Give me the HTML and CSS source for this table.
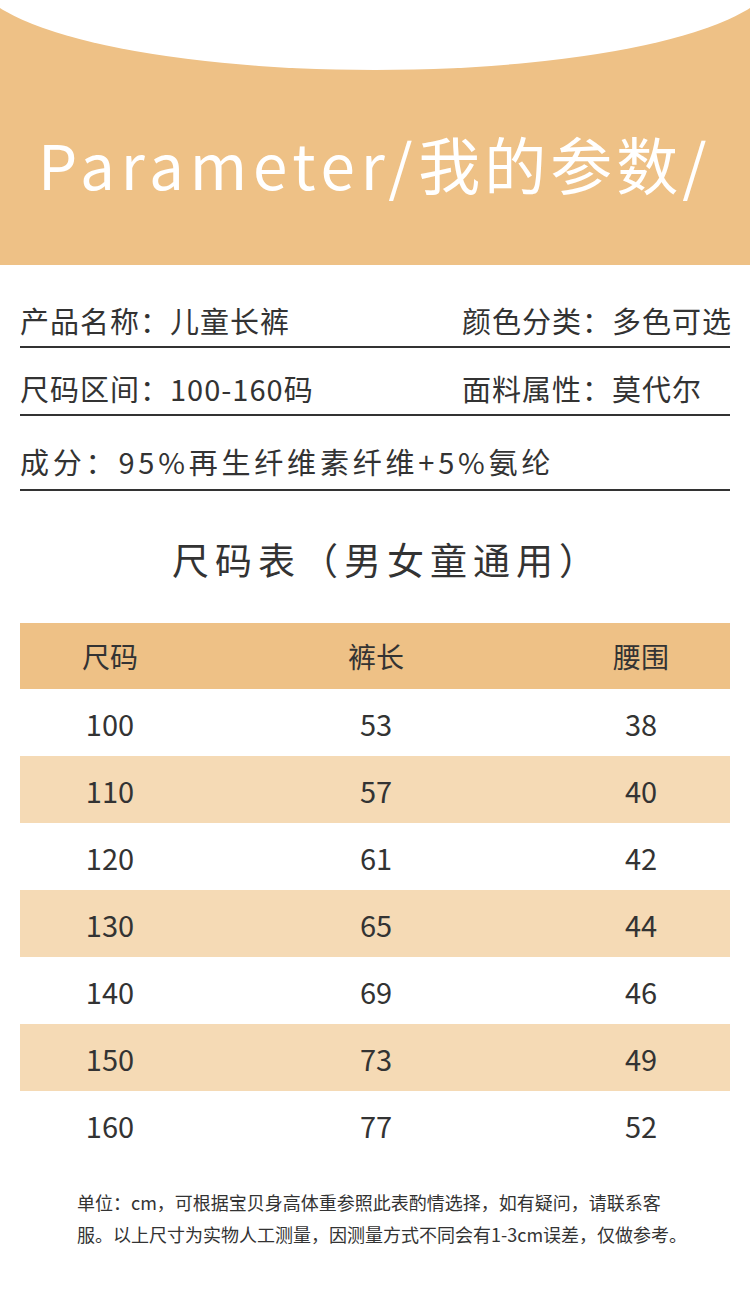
FILE: index.html
```html
<!DOCTYPE html>
<html lang="zh-CN">
<head>
<meta charset="utf-8">
<title>Parameter/我的参数/</title>
<link rel="stylesheet" href="styles.css">
</head>
<body>
<div class="page">
  <header class="hero">
    <div class="hero-arc"></div>
    <h1 class="hero-title"><span class="latin">Parameter/</span>我的参数/</h1>
  </header>

  <section class="info">
    <div class="info-row first">
      <div class="info-cell left">产品名称：儿童长裤</div>
      <div class="info-cell">颜色分类：多色可选</div>
    </div>
    <div class="info-row second">
      <div class="info-cell left">尺码区间：100-160码</div>
      <div class="info-cell">面料属性：莫代尔</div>
    </div>
    <div class="info-row third">
      <div class="info-cell wide">成分：95%再生纤维素纤维+5%氨纶</div>
    </div>
  </section>

  <h2 class="chart-title">尺码表（男女童通用）</h2>

  <div class="size-table">
    <div class="tr head"><div>尺码</div><div>裤长</div><div>腰围</div></div>
    <div class="tr"><div>100</div><div>53</div><div>38</div></div>
    <div class="tr alt"><div>110</div><div>57</div><div>40</div></div>
    <div class="tr"><div>120</div><div>61</div><div>42</div></div>
    <div class="tr alt"><div>130</div><div>65</div><div>44</div></div>
    <div class="tr"><div>140</div><div>69</div><div>46</div></div>
    <div class="tr alt"><div>150</div><div>73</div><div>49</div></div>
    <div class="tr"><div>160</div><div>77</div><div>52</div></div>
  </div>

  <p class="note">单位：cm，可根据宝贝身高体重参照此表酌情选择，如有疑问，请联系客<br>服。以上尺寸为实物人工测量，因测量方式不同会有1-3cm误差，仅做参考。</p>
</div>
</body>
</html>
```

FILE: styles.css
```css
* { box-sizing: border-box; }
html, body {
  margin: 0;
  padding: 0;
  background: #ffffff;
}
body {
  font-family: "Noto Sans CJK SC", "Noto Sans", sans-serif;
  color: #333333;
}
.page {
  width: 750px;
  height: 1314px;
  overflow: hidden;
  background: #ffffff;
}

/* hero */
.hero {
  position: relative;
  height: 265px;
  background: #eec186;
  overflow: hidden;
  padding-top: 131px;
}
.hero-arc {
  position: absolute;
  left: -25px;
  top: -120px;
  width: 800px;
  height: 190px;
  border-radius: 50%;
  background: #ffffff;
}
.hero-title {
  position: relative;
  margin: 0;
  padding-left: 38px;
  font-size: 62px;
  line-height: 64px;
  font-weight: 400;
  letter-spacing: 4px;
  color: #ffffff;
  white-space: nowrap;
}
.hero-title .latin {
  letter-spacing: 5.8px;
}

/* info */
.info {
  padding: 0 20px;
}
.info-row {
  display: flex;
  font-size: 29px;
  line-height: 40px;
  letter-spacing: 1px;
  padding-bottom: 6px;
  border-bottom: 2px solid #333333;
  white-space: nowrap;
}
.info-row.first { margin-top: 35px; }
.info-row.second { margin-top: 20px; }
.info-row.third { margin-top: 25px; padding-bottom: 8px; }
.info-cell.left { width: 442px; flex: none; }
.info-cell.wide { letter-spacing: 3.8px; }

/* chart title */
.chart-title {
  margin: 43px 0 0;
  padding-left: 24px;
  text-align: center;
  font-size: 37px;
  line-height: 50px;
  font-weight: 400;
  letter-spacing: 6px;
  color: #333333;
}

/* table */
.size-table {
  margin: 39px 20px 0;
}
.tr {
  display: grid;
  grid-template-columns: 180px 352px 178px;
  height: 67px;
  align-items: center;
  font-size: 29px;
  color: #333333;
}
.tr > div { text-align: center; }
.tr.head {
  height: 66px;
  background: #eec186;
  font-size: 28px;
}
.tr.alt { background: #f5dab5; }

/* note */
.note {
  margin: 28px 0 0;
  padding-left: 77px;
  font-size: 18px;
  line-height: 32px;
  color: #333333;
  white-space: nowrap;
}
```
